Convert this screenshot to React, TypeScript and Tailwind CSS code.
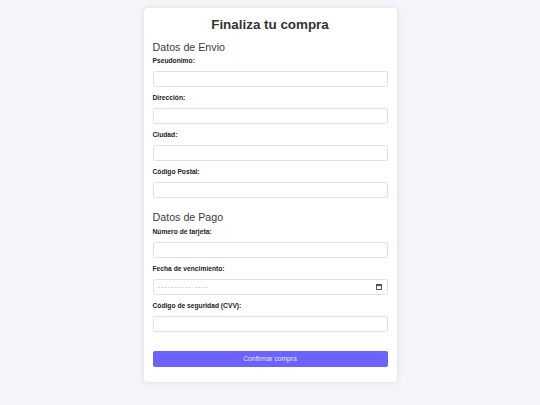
import React from "react";

function Label({ children }: { children: React.ReactNode }) {
  return <label className="block text-[6.7px] leading-[8px] font-bold text-[#222] mb-[5.5px]">{children}</label>;
}

function Field({ label }: { label: string }) {
  return (
    <div>
      <Label>{label}</Label>
      <input
        type="text"
        className="block w-full h-[16px] mb-[7.5px] border border-[#e2e2e2] rounded-[2px] bg-white px-[4px] text-[6.7px] text-[#333] outline-none"
      />
    </div>
  );
}

function MonthField({ label }: { label: string }) {
  return (
    <div>
      <Label>{label}</Label>
      <div className="flex items-center justify-between w-full h-[16px] mb-[7.5px] border border-[#e2e2e2] rounded-[2px] bg-white pl-[4px] pr-[5px]">
        <span className="text-[6.7px] leading-[8px] tracking-[1.2px] text-[#aaa] whitespace-pre">---------- ----</span>
        <svg width="6" height="6" viewBox="0 0 6 6" className="block">
          <rect x="0.5" y="0.5" width="5" height="5" fill="none" stroke="#555" strokeWidth="1" />
          <rect x="0.5" y="0.5" width="5" height="1.6" fill="#555" />
        </svg>
      </div>
    </div>
  );
}

export default function App() {
  return (
    <div className="min-h-screen bg-[#f4f4f9] pt-[8px] font-['Liberation_Sans',Arial,sans-serif]">
      <div className="mx-auto w-[253px] bg-white rounded-[4px] shadow-[0_0_6px_rgba(0,0,0,0.1)] px-[9px] pt-[9px] pb-[15px]">
        <h1 className="text-center text-[13.4px] leading-[16px] font-bold text-[#333]">Finaliza tu compra</h1>
        <h2 className="mt-[7.5px] mb-[3.5px] text-[10.7px] leading-[13px] text-[#3c3c3c]">Datos de Envio</h2>
        <Field label="Pseudonimo:" />
        <Field label="Dirección:" />
        <Field label="Ciudad:" />
        <Field label="Código Postal:" />
        <h2 className="mt-[13.8px] mb-[3.8px] text-[10.7px] leading-[13px] text-[#3c3c3c]">Datos de Pago</h2>
        <Field label="Número de tarjeta:" />
        <MonthField label="Fecha de vencimiento:" />
        <Field label="Código de seguridad (CVV):" />
        <button className="block w-full mt-[19.5px] h-[15.7px] rounded-[2px] bg-[#6c63ff] text-[6.7px] text-[#e8e6ff]">
          Confirmar compra
        </button>
      </div>
    </div>
  );
}
